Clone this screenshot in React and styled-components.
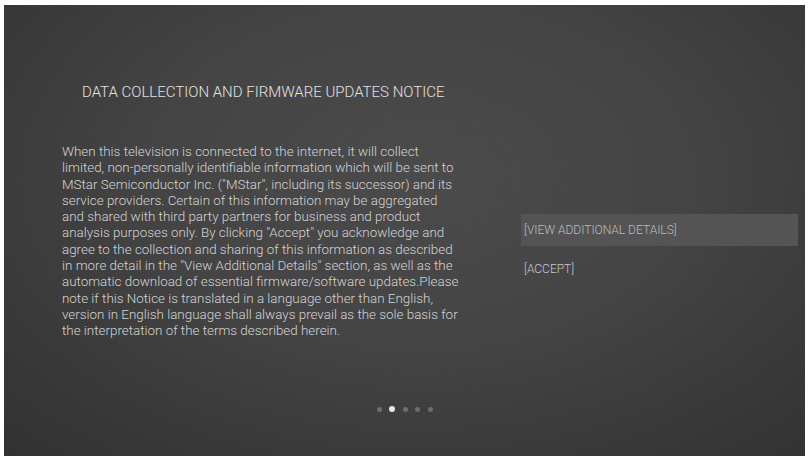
import React from "react"
import styled, { createGlobalStyle } from "styled-components"

const GlobalStyle = createGlobalStyle`
  html, body {
    margin: 0;
    padding: 0;
    background: #ffffff;
  }
  body {
    font-family: Roboto, "Liberation Sans", sans-serif;
  }
`

const lines = [
  "When this television is connected to the internet, it will collect",
  "limited, non-personally identifiable information which will be sent to",
  "MStar Semiconductor Inc. (\"MStar\", including its successor) and its",
  "service providers. Certain of this information may be aggregated",
  "and shared with third party partners for business and product",
  "analysis purposes only. By clicking \"Accept\" you acknowledge and",
  "agree to the collection and sharing of this information as described",
  "in more detail in the \"View Additional Details\" section, as well as the",
  "automatic download of essential firmware/software updates.Please",
  "note if this Notice is translated in a language other than English,",
  "version in English language shall always prevail as the sole basis for",
  "the interpretation of the terms described herein.",
]

const options = [
  { label: "[VIEW ADDITIONAL DETAILS]", focused: true },
  { label: "[ACCEPT]", focused: false },
]

export default function App() {
  return (
    <>
      <GlobalStyle />
      <Screen>
        <Content>
          <NoticeColumn>
            <Title>DATA COLLECTION AND FIRMWARE UPDATES NOTICE</Title>
            <Body>
              {lines.map((l, i) => (
                <Line key={i}>{l}</Line>
              ))}
            </Body>
          </NoticeColumn>
          <Menu>
            {options.map((o) => (
              <Option key={o.label} $focused={o.focused}>
                {o.label}
              </Option>
            ))}
          </Menu>
        </Content>
        <Dots>
          {[0, 1, 2, 3, 4].map((i) => (
            <Dot key={i} $active={i === 1} />
          ))}
        </Dots>
      </Screen>
    </>
  )
}

const Screen = styled.div`
  margin: 5px 6px 7px 4px;
  height: 451px;
  width: 801px;
  display: flex;
  flex-direction: column;
  background: radial-gradient(
    ellipse 75% 85% at 52% 38%,
    #4b4b4b 0%,
    #444444 45%,
    #383838 80%,
    #323232 100%
  );
  overflow: hidden;
`

const Content = styled.div`
  display: flex;
  padding-left: 58px;
`

const NoticeColumn = styled.div`
  width: 410px;
  display: flex;
  flex-direction: column;
  padding-top: 79px;
`

const Title = styled.h1`
  margin: 0 0 0 20px;
  font-size: 15px;
  font-weight: 300;
  line-height: 16px;
  color: #e2e2e2;
  white-space: nowrap;
`

const Body = styled.p`
  margin: 44px 0 0;
  font-size: 13.4px;
  line-height: 16.3px;
  color: #d4d4d4;
  font-weight: 300;
`

const Line = styled.span`
  display: block;
  white-space: nowrap;
`

const Menu = styled.div`
  margin-left: 49px;
  width: 277px;
  padding-top: 209px;
  display: flex;
  flex-direction: column;
  gap: 7px;
`

const Option = styled.div`
  height: 32px;
  display: flex;
  align-items: center;
  padding-left: 3px;
  font-size: 12px;
  font-weight: 300;
  color: ${(p) => (p.$focused ? "#bdbdbd" : "#c8c8c8")};
  background: ${(p) => (p.$focused ? "#545454" : "transparent")};
  white-space: nowrap;
`

const Dots = styled.div`
  margin-top: auto;
  padding-bottom: 44px;
  display: flex;
  justify-content: center;
  align-items: center;
  gap: 7.5px;
`

const Dot = styled.span`
  width: ${(p) => (p.$active ? "6px" : "5px")};
  height: ${(p) => (p.$active ? "6px" : "5px")};
  border-radius: 50%;
  background: ${(p) => (p.$active ? "#e8e8e8" : "#6e6e6e")};
`
